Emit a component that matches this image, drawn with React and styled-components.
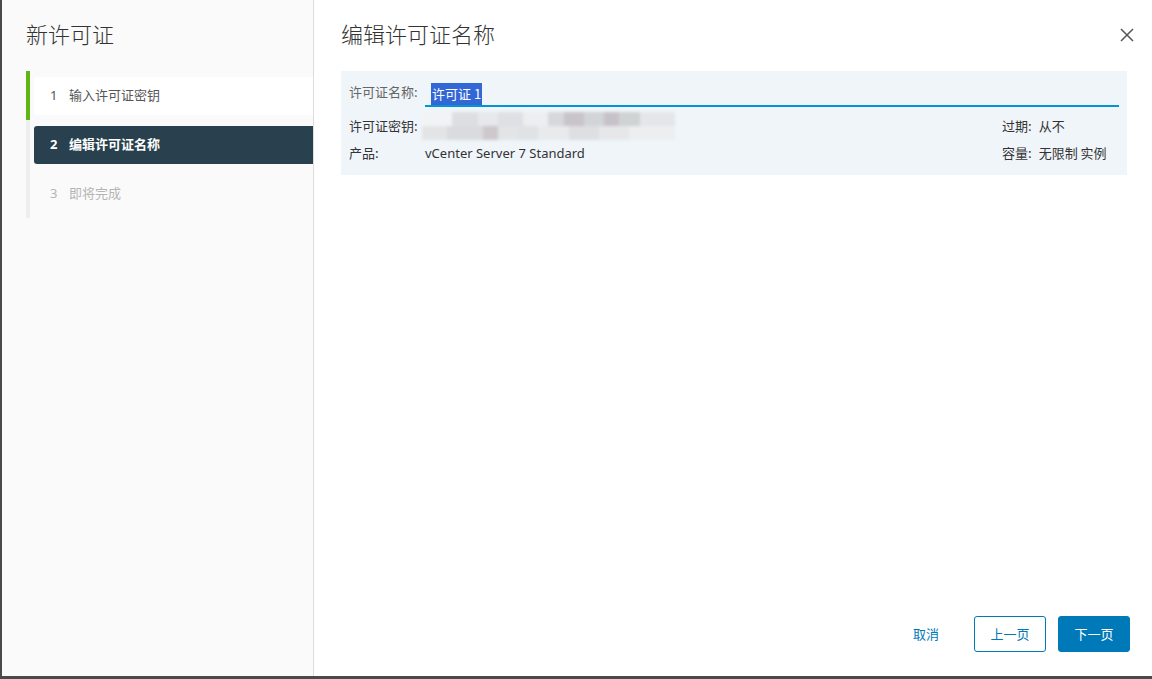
import React from "react";
import styled, { createGlobalStyle } from "styled-components";

const Global = createGlobalStyle`
  html, body { margin: 0; padding: 0; }
  body {
    background: #4a4a4a;
    font-family: "Noto Sans", "Noto Sans CJK SC", sans-serif;
    overflow: hidden;
  }
  * { box-sizing: border-box; }
`;

const Modal = styled.div`
  margin-left: 2px;
  width: 1150px;
  height: 676px;
  display: flex;
  background: #fff;
`;

const Sidebar = styled.aside`
  width: 312px;
  flex: none;
  background: #fafafa;
  border-right: 1px solid #dddddd;
  padding: 21px 0 0 24px;
  display: flex;
  flex-direction: column;
`;

const SideTitle = styled.h2`
  margin: 0;
  font-size: 22px;
  line-height: 24px;
  font-weight: 300;
  color: #333;
  font-family: "Noto Sans CJK SC", sans-serif;
`;

const StepList = styled.ol`
  list-style: none;
  margin: 26px 0 0 0;
  padding: 0;
`;

const StepItem = styled.li`
  border-left: 4px solid ${(p) => (p.$done ? "#60b515" : "#eeeeee")};
  padding: 6px 0 5px 4px;
`;

const StepBox = styled.div`
  height: 38px;
  display: flex;
  align-items: center;
  padding: 0 0 3px 16px;
  border-radius: 3px 0 0 3px;
  font-size: 13px;
  font-family: "Noto Sans", "Noto Sans CJK SC", sans-serif;
  background: ${(p) =>
    p.$state === "active" ? "#29414e" : p.$state === "done" ? "#ffffff" : "transparent"};
  color: ${(p) =>
    p.$state === "active" ? "#ffffff" : p.$state === "done" ? "#565656" : "#b5b5b5"};
  font-weight: ${(p) => (p.$state === "active" ? 700 : 400)};
`;

const StepNum = styled.span`
  width: 19px;
  flex: none;
`;

const Main = styled.section`
  flex: 1;
  display: flex;
  flex-direction: column;
  padding: 0 25px 24px 27px;
`;

const Header = styled.div`
  height: 71px;
  display: flex;
  align-items: center;
  justify-content: space-between;
  padding-bottom: 5px;
`;

const Title = styled.h3`
  margin: 0;
  font-size: 22px;
  font-weight: 300;
  color: #333;
  font-family: "Noto Sans CJK SC", sans-serif;
`;

const CloseBtn = styled.button`
  border: none;
  background: none;
  padding: 0;
  margin: 3px -9px 0 0;
  width: 18px;
  height: 18px;
  display: flex;
  align-items: center;
  justify-content: center;
  cursor: pointer;
`;

const Panel = styled.div`
  background: #f0f5fa;
  padding: 8px 8px 9px 8px;
  display: flex;
  flex-direction: column;
`;

const NameRow = styled.div`
  display: flex;
  align-items: flex-start;
  height: 28px;
`;

const Label = styled.span`
  width: 76px;
  flex: none;
  font-size: 13px;
  line-height: ${(p) => (p.$muted ? "25px" : "normal")};
  color: ${(p) => (p.$muted ? "#666" : "#333")};
  font-family: "Noto Sans CJK SC", sans-serif;
`;

const InputLine = styled.div`
  flex: 1;
  height: 28px;
  border-bottom: 2px solid #0095d3;
  padding: 4px 6px 0;
  display: flex;
  align-items: flex-start;
`;

const Selected = styled.span`
  background: #3367d6;
  color: #fff;
  font-size: 13px;
  line-height: 22px;
  padding: 0 1px;
  font-family: "Noto Sans CJK SC", sans-serif;
`;

const InfoRow = styled.div`
  display: flex;
  align-items: center;
  height: 27px;
  margin-top: ${(p) => p.$mt || 0}px;
`;

const Value = styled.span`
  flex: 1;
  font-size: 13px;
  color: #333;
  font-family: "Noto Sans", "Noto Sans CJK SC", sans-serif;
`;

const Side = styled.div`
  width: 117px;
  flex: none;
  display: flex;
  font-size: 13px;
  color: #333;
  font-family: "Noto Sans CJK SC", sans-serif;
  gap: 7px;
`;

const KeyCell = styled.div`
  flex: 1;
  display: flex;
  align-items: center;
  margin-left: -3px;
`;

const KeyMask = styled.div`
  width: 253px;
  height: 28px;
  filter: blur(1.8px);
  background:
    linear-gradient(90deg,
      #f2f3f5 0 12%, #dcdfe2 12% 22%, #e6e8ea 22% 30%, #dde0e4 30% 40%,
      #eceeef 40% 50%, #d6d8db 50% 56%, #c9c4cb 56% 64%, #d2d4d7 64% 72%,
      #c7c2c9 72% 78%, #d0d3d3 78% 86%, #e4e6e8 86% 100%) top / 100% 50% no-repeat,
    linear-gradient(90deg,
      #e2e4e6 0 10%, #d9dbde 10% 24%, #cdc8cc 24% 30%, #e2e4e6 30% 38%,
      #dfe3e6 38% 46%, #e8eaec 46% 58%, #dddfe2 58% 70%, #e6e7e9 70% 82%,
      #eceef0 82% 100%) bottom / 100% 50% no-repeat;
`;

const Footer = styled.div`
  margin-top: auto;
  display: flex;
  justify-content: flex-end;
  gap: 12px;
  margin-right: -3px;
`;

const Button = styled.button`
  width: 72px;
  height: 36px;
  border-radius: 3px;
  font-size: 13px;
  padding: 0 0 2px;
  font-family: "Noto Sans CJK SC", sans-serif;
  cursor: pointer;
  border: 1px solid ${(p) => (p.$variant === "link" ? "transparent" : "#0079b8")};
  background: ${(p) => (p.$variant === "primary" ? "#0079b8" : "transparent")};
  color: ${(p) => (p.$variant === "primary" ? "#fff" : "#0079b8")};
`;

const steps = [
  { n: "1", label: "输入许可证密钥", state: "done" },
  { n: "2", label: "编辑许可证名称", state: "active" },
  { n: "3", label: "即将完成", state: "todo" },
];

export default function App() {
  return (
    <>
      <Global />
      <Modal>
        <Sidebar>
          <SideTitle>新许可证</SideTitle>
          <StepList>
            {steps.map((s) => (
              <StepItem key={s.n} $done={s.state === "done"}>
                <StepBox $state={s.state}>
                  <StepNum>{s.n}</StepNum>
                  <span>{s.label}</span>
                </StepBox>
              </StepItem>
            ))}
          </StepList>
        </Sidebar>
        <Main>
          <Header>
            <Title>编辑许可证名称</Title>
            <CloseBtn aria-label="关闭">
              <svg width="14" height="14" viewBox="0 0 14 14">
                <path d="M1 1L13 13M13 1L1 13" stroke="#565656" strokeWidth="1.5" />
              </svg>
            </CloseBtn>
          </Header>
          <Panel>
            <NameRow>
              <Label $muted>许可证名称:</Label>
              <InputLine>
                <Selected>许可证 1</Selected>
              </InputLine>
            </NameRow>
            <InfoRow $mt={5}>
              <Label>许可证密钥:</Label>
              <KeyCell>
                <KeyMask />
              </KeyCell>
              <Side>
                <span>过期:</span>
                <span>从不</span>
              </Side>
            </InfoRow>
            <InfoRow>
              <Label>产品:</Label>
              <Value>vCenter Server 7 Standard</Value>
              <Side>
                <span>容量:</span>
                <span>无限制 实例</span>
              </Side>
            </InfoRow>
          </Panel>
          <Footer>
            <Button $variant="link">取消</Button>
            <Button $variant="outline">上一页</Button>
            <Button $variant="primary">下一页</Button>
          </Footer>
        </Main>
      </Modal>
    </>
  );
}
